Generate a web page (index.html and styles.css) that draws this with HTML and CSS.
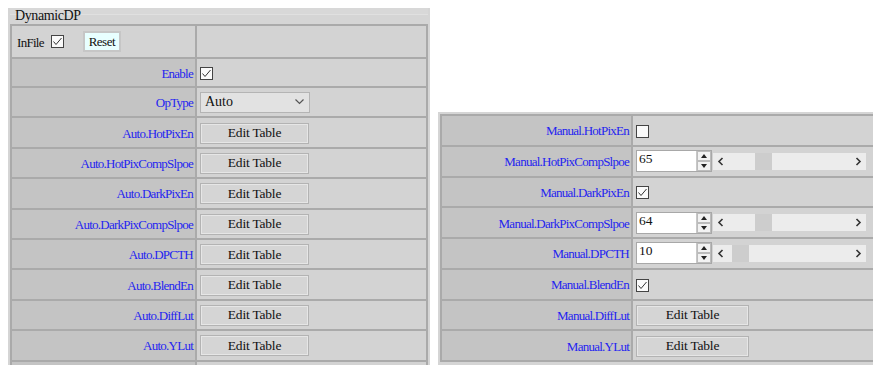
FILE: index.html
```html
<!DOCTYPE html>
<html>
<head>
    <title>DynamicDP</title>
    <link rel="stylesheet" href="styles.css">
</head>
<body>
    <div class="page">
        <div class="panel panel-auto">
            <div class="panel-title">DynamicDP</div>
            <table class="grid grid-auto">
                <tr class="row-head">
                    <td>
                        <div class="head-cell">
                            <span class="infile">InFile</span>
                            <span class="check on"><svg width="13" height="13" viewBox="0 0 13 13"><rect x="0.5" y="0.5" width="12" height="12" fill="#fafafa" stroke="#444"/><polyline points="2.5,6.5 5,9.5 10.5,3" fill="none" stroke="#333" stroke-width="1"/></svg></span>
                            <button class="reset">Reset</button>
                        </div>
                    </td>
                    <td></td>
                </tr>
                <tr class="row-enable">
                    <td class="label">Enable</td>
                    <td><span class="check on"><svg width="13" height="13" viewBox="0 0 13 13"><rect x="0.5" y="0.5" width="12" height="12" fill="#fafafa" stroke="#444"/><polyline points="2.5,6.5 5,9.5 10.5,3" fill="none" stroke="#333" stroke-width="1"/></svg></span></td>
                </tr>
                <tr>
                    <td class="label">OpType</td>
                    <td>
                        <div class="select">
                            <span>Auto</span>
                            <svg width="9" height="6" viewBox="0 0 9 6"><polyline points="0.5,0.5 4.5,4.5 8.5,0.5" fill="none" stroke="#555" stroke-width="1.2"/></svg>
                        </div>
                    </td>
                </tr>
                <tr><td class="label">Auto.HotPixEn</td><td><button class="edit">Edit Table</button></td></tr>
                <tr><td class="label">Auto.HotPixCompSlpoe</td><td><button class="edit">Edit Table</button></td></tr>
                <tr><td class="label">Auto.DarkPixEn</td><td><button class="edit">Edit Table</button></td></tr>
                <tr><td class="label">Auto.DarkPixCompSlpoe</td><td><button class="edit">Edit Table</button></td></tr>
                <tr><td class="label">Auto.DPCTH</td><td><button class="edit">Edit Table</button></td></tr>
                <tr><td class="label">Auto.BlendEn</td><td><button class="edit">Edit Table</button></td></tr>
                <tr><td class="label">Auto.DiffLut</td><td><button class="edit">Edit Table</button></td></tr>
                <tr><td class="label">Auto.YLut</td><td><button class="edit">Edit Table</button></td></tr>
                <tr><td class="label"></td><td></td></tr>
            </table>
        </div>

        <div class="panel panel-manual">
            <table class="grid grid-manual">
                <tr>
                    <td class="label">Manual.HotPixEn</td>
                    <td><span class="check"><svg width="13" height="13" viewBox="0 0 13 13"><rect x="0.5" y="0.5" width="12" height="12" fill="#fafafa" stroke="#444"/></svg></span></td>
                </tr>
                <tr>
                    <td class="label">Manual.HotPixCompSlpoe</td>
                    <td>
                        <div class="slider-row">
                            <div class="number">
                                <span class="num-val">65</span>
                                <span class="spin"><span class="spin-up"></span><span class="spin-down"></span></span>
                            </div>
                            <div class="scroll">
                                <svg class="arrow" width="17" height="17" viewBox="0 0 17 17"><polyline points="9.5,5 6,8.5 9.5,12" fill="none" stroke="#333" stroke-width="1.6"/></svg>
                                <span class="track"><span class="thumb" style="margin-left: 25px"></span></span>
                                <svg class="arrow" width="17" height="17" viewBox="0 0 17 17"><polyline points="7.5,5 11,8.5 7.5,12" fill="none" stroke="#333" stroke-width="1.6"/></svg>
                            </div>
                        </div>
                    </td>
                </tr>
                <tr>
                    <td class="label">Manual.DarkPixEn</td>
                    <td><span class="check on"><svg width="13" height="13" viewBox="0 0 13 13"><rect x="0.5" y="0.5" width="12" height="12" fill="#fafafa" stroke="#444"/><polyline points="2.5,6.5 5,9.5 10.5,3" fill="none" stroke="#333" stroke-width="1"/></svg></span></td>
                </tr>
                <tr>
                    <td class="label">Manual.DarkPixCompSlpoe</td>
                    <td>
                        <div class="slider-row">
                            <div class="number">
                                <span class="num-val">64</span>
                                <span class="spin"><span class="spin-up"></span><span class="spin-down"></span></span>
                            </div>
                            <div class="scroll">
                                <svg class="arrow" width="17" height="17" viewBox="0 0 17 17"><polyline points="9.5,5 6,8.5 9.5,12" fill="none" stroke="#333" stroke-width="1.6"/></svg>
                                <span class="track"><span class="thumb" style="margin-left: 25px"></span></span>
                                <svg class="arrow" width="17" height="17" viewBox="0 0 17 17"><polyline points="7.5,5 11,8.5 7.5,12" fill="none" stroke="#333" stroke-width="1.6"/></svg>
                            </div>
                        </div>
                    </td>
                </tr>
                <tr>
                    <td class="label">Manual.DPCTH</td>
                    <td>
                        <div class="slider-row">
                            <div class="number">
                                <span class="num-val">10</span>
                                <span class="spin"><span class="spin-up"></span><span class="spin-down"></span></span>
                            </div>
                            <div class="scroll">
                                <svg class="arrow" width="17" height="17" viewBox="0 0 17 17"><polyline points="9.5,5 6,8.5 9.5,12" fill="none" stroke="#333" stroke-width="1.6"/></svg>
                                <span class="track"><span class="thumb" style="margin-left: 2px"></span></span>
                                <svg class="arrow" width="17" height="17" viewBox="0 0 17 17"><polyline points="7.5,5 11,8.5 7.5,12" fill="none" stroke="#333" stroke-width="1.6"/></svg>
                            </div>
                        </div>
                    </td>
                </tr>
                <tr>
                    <td class="label">Manual.BlendEn</td>
                    <td><span class="check on"><svg width="13" height="13" viewBox="0 0 13 13"><rect x="0.5" y="0.5" width="12" height="12" fill="#fafafa" stroke="#444"/><polyline points="2.5,6.5 5,9.5 10.5,3" fill="none" stroke="#333" stroke-width="1"/></svg></span></td>
                </tr>
                <tr><td class="label">Manual.DiffLut</td><td><button class="edit edit-wide">Edit Table</button></td></tr>
                <tr><td class="label">Manual.YLut</td><td><button class="edit edit-wide">Edit Table</button></td></tr>
            </table>
        </div>
    </div>
</body>
</html>
```

FILE: styles.css
```css
body {
    margin: 8px;
    font-family: "Liberation Serif", "Times New Roman", serif;
    font-size: 13px;
    color: #111;
    background-color: white;
}
.page {
    display: flex;
    align-items: flex-start;
    gap: 8px;
}
.panel {
    flex: none;
    background-color: #d5d5d5;
    padding: 0 2px;
}
.panel-auto {
    width: 418px;
    height: 380px;
}
.panel-manual {
    width: 435px;
    margin-top: 104px;
    padding-top: 2px;
    padding-bottom: 8px;
}
.panel-title {
    height: 16px;
    line-height: 16px;
    padding-left: 5px;
    font-size: 14px;
    letter-spacing: -0.4px;
    background: linear-gradient(#d8d8d8 0, #d8d8d8 6px, #e0e0e0 6px, #e0e0e0 7px, #d5d5d5 7px);
}
.grid {
    border-collapse: collapse;
    width: 100%;
    border: 2px solid #aaaaaa;
}
.grid td {
    border: 1px solid #aaaaaa;
    border-width: 2px 2px 0 0;
    background-color: #d3d3d3;
    padding: 0 3px;
    height: 28.4px;
    white-space: nowrap;
    vertical-align: middle;
}
.grid td.label {
    background-color: #c4c4c4;
    color: #2424f0;
    text-align: right;
    padding-right: 2px;
    padding-top: 2px;
    height: 26.4px;
    font-size: 13px;
    letter-spacing: -0.75px;
}
.grid-auto td.label {
    width: 178px;
}
.grid-manual td {
    height: 28.75px;
}
.grid-manual td.label {
    width: 184px;
    height: 26.75px;
}
.row-head td {
    height: 31px;
}
.row-enable td {
    height: 27px;
}
.row-enable td.label {
    height: 25px;
}
.head-cell {
    display: flex;
    align-items: center;
    padding-left: 2px;
}
.infile {
    margin-right: 7px;
    padding-top: 2px;
    font-size: 13px;
    letter-spacing: -0.7px;
}
.check {
    display: inline-block;
    width: 13px;
    height: 13px;
    vertical-align: middle;
}
.check svg {
    display: block;
}
.reset {
    margin-left: 19px;
    font-family: inherit;
    font-size: 13px;
    letter-spacing: -0.5px;
    color: #111;
    background-color: #e8ffff;
    border: 2px solid #c6c6c6;
    height: 21px;
    width: 38px;
    padding: 0;
}
.select {
    display: flex;
    align-items: center;
    justify-content: space-between;
    width: 110px;
    height: 21px;
    box-sizing: border-box;
    background-color: #e2e2e2;
    border: 1px solid #b4b4b4;
    padding: 0 5px 0 4px;
    font-size: 14px;
    color: #111;
}
.edit {
    font-family: inherit;
    font-size: 13.5px;
    letter-spacing: -0.2px;
    color: #111;
    background-color: #d5d5d5;
    border: 1px solid #b3b3b3;
    box-shadow: inset 0 0 0 1px #e6e6e6;
    width: 109px;
    height: 21px;
    padding: 0;
    margin-top: 1px;
}
.edit-wide {
    width: 113px;
}
.slider-row {
    display: flex;
    align-items: center;
    gap: 1px;
}
.number {
    display: flex;
    align-items: stretch;
    justify-content: space-between;
    width: 76px;
    height: 22px;
    box-sizing: border-box;
    background-color: #fff;
    border: 1px solid #a8a8a8;
    font-size: 13.5px;
}
.num-val {
    padding-left: 2px;
    line-height: 16px;
}
.spin {
    display: flex;
    flex-direction: column;
    width: 14px;
    border-left: 1px solid #c8c8c8;
}
.spin-up, .spin-down {
    flex: 1;
    position: relative;
    background-color: #f2f2f2;
    border: 1px solid #bcbcbc;
}
.spin-up::after, .spin-down::after {
    content: "";
    position: absolute;
    left: 3px;
    border-left: 3px solid transparent;
    border-right: 3px solid transparent;
}
.spin-up::after {
    top: 2px;
    border-bottom: 4px solid #222;
}
.spin-down::after {
    top: 2px;
    border-top: 4px solid #222;
}
.scroll {
    display: flex;
    align-items: center;
    width: 153px;
    height: 17px;
    background-color: #ececec;
}
.arrow {
    display: block;
    flex: none;
}
.track {
    flex: 1;
    display: flex;
}
.thumb {
    width: 17px;
    height: 17px;
    background-color: #cdcdcd;
}
```
